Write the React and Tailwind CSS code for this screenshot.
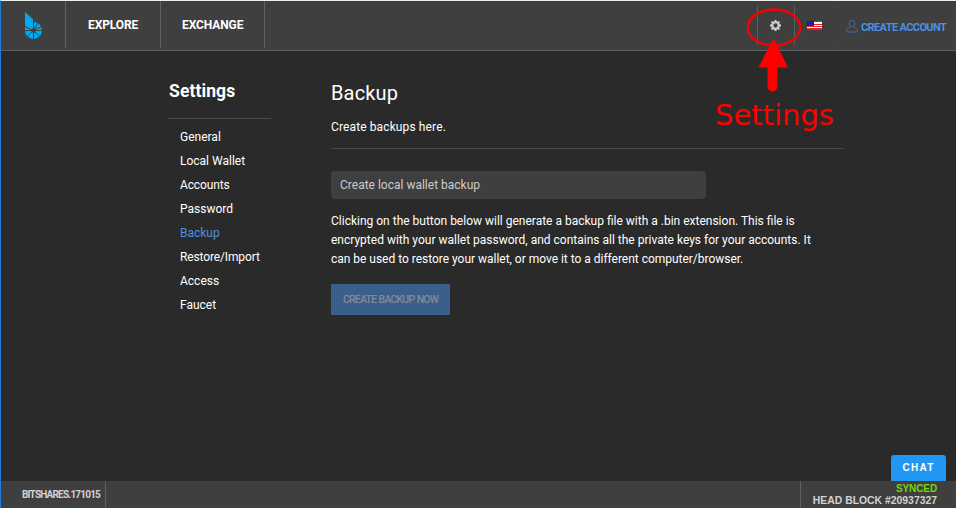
import React from "react";

const links = ["General", "Local Wallet", "Accounts", "Password", "Backup", "Restore/Import", "Access", "Faucet"];

function Logo() {
  return (
    <svg width="18" height="28" viewBox="0 0 18 28" className="block">
      <circle cx="8.5" cy="18.5" r="8.5" fill="#03a9ec" />
      <path d="M0 0L8 7.300V18.500H0Z" fill="#03a9ec" />
      <path d="M8.500 7V28M0 18.500H18M0 14.500L8.500 18.500M13.500 10L8.500 18.500L17.500 14M8.500 18.500L14.800 24.800M8.500 18.500L2.200 24.800" fill="none" stroke="#3f3f3f" strokeWidth="1" />
      <circle cx="8.500" cy="18.500" r="2.300" fill="#3f3f3f" />
    </svg>
  );
}

function Gear() {
  return (
    <svg width="11" height="11" viewBox="0 0 16 16" className="block" fill="#d0d0d0">
      <path fillRule="evenodd" d="M6.6 0h2.8l.4 2.2 1.2.5L12.9 1.400 14.6 3.100 13.300 5l.5 1.200 2.200.400v2.800l-2.200.400-.5 1.200 1.300 1.900-1.700 1.700-1.900-1.300-1.200.5-.4 2.200H6.600l-.4-2.200L5 13.300 3.100 14.600 1.400 12.900 2.700 11 2.200 9.800 0 9.400V6.600l2.200-.4L2.700 5 1.400 3.100 3.100 1.400 5 2.700l1.200-.5zM8 4.900a3.100 3.100 0 1 0 0 6.200a3.100 3.100 0 0 0 0-6.200z" />
    </svg>
  );
}

function Flag() {
  return (
    <svg width="15" height="9" viewBox="0 0 15 9" className="block" shapeRendering="crispEdges">
      <rect width="15" height="9" fill="#fff" />
      <path fill="#ee1c25" d="M0 0h15v1H0zM0 3h15v1H0zM0 5h15v1H0zM0 7h15v2H0z" />
      <rect width="7" height="5" fill="#1a1a9c" />
      <path fill="#4444b0" d="M1 1h1v1H1zM4 1h1v1H4zM2 3h1v1H2zM5 3h1v1H5z" />
    </svg>
  );
}

function Person() {
  return (
    <svg width="12" height="13" viewBox="0 0 12 13" className="block" fill="none" stroke="#416ea8" strokeWidth="1">
      <path d="M6 .5C4.300.5 3.200 1.700 3.200 3.500S4.300 6.800 6 6.800S8.800 5.300 8.800 3.500S7.700.5 6 .5zM3.900 7.500C1.500 8 .5 9.200.5 11.200Q.5 12 1.300 12H10.700Q11.500 12 11.500 11.200C11.500 9.200 10.500 8 8.100 7.500" />
    </svg>
  );
}

export default function App() {
  return (
    <div className="relative flex h-[508px] w-[956px] flex-col overflow-hidden border-t border-l border-t-[#eef0f0] border-l-[#1a80d8] bg-[#2a2a2a] font-['Roboto',sans-serif] text-white">
      <header className="flex h-[50px] shrink-0 border-b border-[#5f5f5f] bg-[#3f3f3f]">
        <div className="h-[47px] w-[65px] border-r border-[#616161] pt-[11px] pl-6"><Logo /></div>
        <nav className="flex h-[47px] text-[12px] leading-[48px] font-bold">
          <a className="w-[95px] border-r border-[#616161] pl-[22px] tracking-[-0.1px]">EXPLORE</a>
          <a className="w-[104px] border-r border-[#616161] pl-[21px] tracking-[-0.1px]">EXCHANGE</a>
        </nav>
        <div className="mt-[5px] ml-auto flex h-[39px]">
          <div className="w-[38px] border-x border-[#5c5c5c] pt-[14px] pl-3"><Gear /></div>
          <div className="w-10 pt-[15px] pl-3"><Flag /></div>
          <div className="flex w-[121px] pt-[14px] pl-[11px]">
            <Person />
            <span className="ml-[3px] pt-px text-[11px] leading-[13px] font-bold tracking-[-0.62px] whitespace-nowrap text-[#4a90e2]">CREATE ACCOUNT</span>
          </div>
        </div>
      </header>

      <main className="flex min-h-0 flex-1">
        <aside className="ml-[167px] w-[103px] shrink-0 text-[12px]">
          <h2 className="h-[68px] border-b border-[#484848] pt-[28px] pl-px text-[17.500px] leading-6 font-bold tracking-[0.1px]">Settings</h2>
          <ul className="pt-[6px] pl-3">
            {links.map((l) => (
              <li key={l} className={`h-6 leading-6 whitespace-nowrap ${l === "Backup" ? "text-[#4a90e2]" : ""} ${l === "Restore/Import" || l === "Accounts" ? "tracking-[-0.13px]" : ""}`}>{l}</li>
            ))}
          </ul>
        </aside>
        <section className="ml-[60px] w-[513px] shrink-0 text-[12px]">
          <h1 className="pt-[28px] text-[20px] leading-[28px] tracking-[0.15px]">Backup</h1>
          <p className="mt-[11px] h-[31px] border-b border-[#484848] leading-[19px] tracking-[0.12px]">Create backups here.</p>
          <div className="mt-[22px] h-7 w-[375px] rounded-[4px] bg-[#3f3f3f] pl-[9px] leading-7 text-[#cccccc]">Create local wallet backup</div>
          <p className="mt-[13px] leading-[19px] whitespace-nowrap">
            Clicking on the button below will generate a backup file with a .bin extension. This file is<br />
            encrypted with your wallet password, and contains all the private keys for your accounts. It<br />
            <span className="tracking-[-0.02px]">can be used to restore your wallet, or move it to a different computer/browser.</span>
          </p>
          <button className="mt-[15px] block h-[31px] w-[119px] bg-[#3a5f8a] pt-px pl-3 text-left text-[10.500px] font-medium tracking-[-0.8px] [word-spacing:0.5px] whitespace-nowrap text-[#7f8b98]">CREATE BACKUP NOW</button>
        </section>
      </main>

      <footer className="flex h-[27px] shrink-0 bg-[#3f3f3f] font-bold">
        <div className="w-[105px] border-r border-[#606060] pl-[21px] text-[10px] leading-[27px] tracking-[-0.8px] text-[#d2d2d2]">BITSHARES.171015</div>
        <div className="ml-auto w-[156px] border-l border-[#606060] pt-[2px] pr-[19px] text-right font-['Liberation_Sans',sans-serif] text-[10.400px] leading-[12px] whitespace-nowrap text-[#d2d2d2]">
          <div className="text-[10px] tracking-[-0.1px] text-[#74d60b]">SYNCED</div>
          <div>HEAD BLOCK #20937327</div>
        </div>
      </footer>

      <button className="absolute top-[454px] left-[890px] h-[26px] w-[55px] rounded-t-[3px] bg-[#2196f3] pb-[2px] font-['Liberation_Sans',sans-serif] text-[10px] font-bold tracking-[1.300px]">CHAT</button>

      <svg className="absolute top-0 left-[699px]" width="150" height="100" viewBox="700 1 150 100" fill="none">
        <path d="M834 6h1v1h-1zM834 44h1v1h-1z" fill="#626262" />
        <ellipse cx="774" cy="27.500" rx="26.200" ry="18" stroke="#fa0000" strokeWidth="2.300" />
        <path d="M773.500 38L788 67.500H758.500Z" fill="#ff0000" />
        <path d="M772.500 62V86.500" stroke="#ff0000" strokeWidth="10" strokeLinecap="round" />
      </svg>
      <span className="absolute top-[96px] left-[714px] font-['DejaVu_Sans',sans-serif] text-[29px] leading-[36px] whitespace-nowrap text-[#ff0000]">Settings</span>
    </div>
  );
}
